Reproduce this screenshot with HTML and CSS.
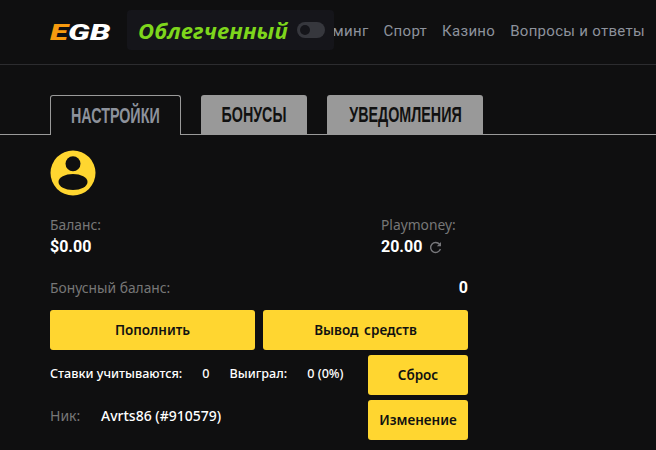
FILE: index.html
```html
<!DOCTYPE html>
<html lang="en">
<head>
    <meta charset="UTF-8">
    <title>EGB</title>
    <link rel="stylesheet" href="styles.css">
</head>
<body>

    <header class="header">
        <div class="logo"><span class="logo-e">E</span>GB</div>
        <nav class="nav">
            <a>Гейминг</a>
            <a>Спорт</a>
            <a>Казино</a>
            <a>Вопросы и ответы</a>
        </nav>
        <div class="lite-box">
            <span class="lite-label">Облегченный</span>
            <span class="toggle"><span class="toggle-knob"></span></span>
        </div>
    </header>

    <div class="tabs">
        <div class="tab tab-settings active"><span class="tab-text">НАСТРОЙКИ</span></div>
        <div class="tab tab-bonus"><span class="tab-text">БОНУСЫ</span></div>
        <div class="tab tab-notify"><span class="tab-text">УВЕДОМЛЕНИЯ</span></div>
    </div>

    <main class="content">
        <svg class="avatar" width="46" height="46" viewBox="0 0 46 46">
            <circle cx="23" cy="23" r="22.5" fill="#ffd630"/>
            <circle cx="23" cy="13.7" r="7.5" fill="#0f0f10"/>
            <ellipse cx="23" cy="32" rx="14.5" ry="8" fill="#0f0f10"/>
        </svg>

        <div class="balances">
            <div>
                <div class="label">Баланс:</div>
                <div class="amount">$0.00</div>
            </div>
            <div class="playmoney">
                <div class="label">Playmoney:</div>
                <div class="amount">20.00
                    <svg class="refresh" width="13" height="13" viewBox="0 0 13 13">
                        <path d="M10.6 3.4A5 5 0 1 0 11.4 8" fill="none" stroke="#77777b" stroke-width="1.4"/>
                        <path d="M12 1v4.2H7.8z" fill="#77777b"/>
                    </svg>
                </div>
            </div>
        </div>

        <div class="bonus-row">
            <span class="label">Бонусный баланс:</span>
            <span class="bonus-value">0</span>
        </div>

        <div class="main-buttons">
            <button class="btn">Пополнить</button>
            <button class="btn">Вывод средств</button>
        </div>

        <div class="stats">
            <div class="stats-text">
                <div class="stats-row">
                    <span class="stat-name">Ставки учитываются:</span>
                    <span class="stat-val">0</span>
                    <span class="stat-name">Выиграл:</span>
                    <span class="stat-val">0 (0%)</span>
                </div>
                <div class="nick-row">
                    <span class="nick-label">Ник:</span>
                    <span class="nick-value">Avrts86 (#910579)</span>
                </div>
            </div>
            <div class="side-buttons">
                <button class="btn">Сброс</button>
                <button class="btn">Изменение</button>
            </div>
        </div>
    </main>

</body>
</html>
```

FILE: styles.css
```css
body {
    font-family: 'Noto Sans', sans-serif;
    background-color: #0f0f10;
    margin: 0;
    padding: 0;
    height: 450px;
    overflow: hidden;
    color: #fff;
}

.header {
    display: flex;
    align-items: center;
    justify-content: space-between;
    height: 64px;
    padding: 0 11px 0 50px;
    border-bottom: 1px solid #2c2c2f;
    position: relative;
}

.logo {
    font-family: 'Roboto', sans-serif;
    font-size: 22px;
    font-weight: 900;
    font-style: italic;
    color: #fff;
    transform: scaleX(1.5);
    transform-origin: left center;
}

.logo-e {
    color: #f79a0e;
}

.nav {
    display: flex;
    gap: 15px;
    padding-bottom: 2px;
    font-family: 'Roboto', sans-serif;
    font-size: 15px;
    letter-spacing: 0.3px;
    color: #8d929c;
}

.lite-box {
    position: absolute;
    top: 10px;
    left: 127px;
    width: 207px;
    height: 40px;
    box-sizing: border-box;
    padding-left: 11px;
    display: flex;
    align-items: center;
    background-color: #15151a;
    border-radius: 4px;
}

.lite-label {
    font-family: 'Open Sans', sans-serif;
    font-size: 22px;
    font-weight: 700;
    font-style: italic;
    letter-spacing: 0.1px;
    color: #7ed61c;
}

.toggle {
    width: 28px;
    height: 16px;
    margin-left: 9px;
    padding: 3px;
    box-sizing: border-box;
    background-color: #36373d;
    border-radius: 8px;
}

.toggle-knob {
    display: block;
    width: 10px;
    height: 10px;
    background-color: #15151a;
    border-radius: 50%;
}

.tabs {
    display: flex;
    gap: 20px;
    height: 40px;
    box-sizing: border-box;
    margin-top: 30px;
    padding-left: 50px;
    border-bottom: 1px solid #9a9a9a;
}

.tab {
    display: flex;
    justify-content: center;
    align-items: center;
    height: 39px;
    background-color: #999;
    color: #111;
    border-radius: 3px 3px 0 0;
    box-sizing: border-box;
}

.tab-settings {
    width: 131px;
}

.tab-bonus {
    width: 106px;
}

.tab-notify {
    width: 156px;
}

.tab-text {
    font-family: 'Liberation Sans', sans-serif;
    font-size: 22px;
    font-weight: 700;
    white-space: nowrap;
    transform: scaleX(0.65);
}

.tab.active {
    height: 40px;
    background-color: #0f0f10;
    color: #8d929c;
    border: 1px solid #9a9a9a;
    border-bottom: none;
}

.content {
    width: 418px;
    margin-left: 50px;
    padding-top: 15px;
}

.avatar {
    display: block;
}

.balances {
    display: flex;
    justify-content: space-between;
    margin-top: 20px;
}

.playmoney {
    width: 87px;
}

.label {
    font-size: 13.8px;
    line-height: 18px;
    color: #777;
}

.amount {
    font-family: 'Roboto', sans-serif;
    font-size: 16px;
    font-weight: 700;
    line-height: 22px;
    margin-top: 2px;
    display: flex;
    align-items: center;
    gap: 7px;
}

.bonus-row {
    display: flex;
    justify-content: space-between;
    align-items: center;
    margin-top: 20px;
}

.bonus-value {
    font-family: 'Roboto', sans-serif;
    font-size: 16px;
    font-weight: 700;
}

.main-buttons {
    display: flex;
    gap: 8px;
    margin-top: 13px;
}

.main-buttons .btn {
    flex: 1;
}

.btn {
    font-family: 'Noto Sans', sans-serif;
    font-size: 13.5px;
    font-weight: 600;
    word-spacing: 2px;
    height: 40px;
    padding: 0;
    color: #111;
    background-color: #ffd630;
    border: none;
    border-radius: 3px;
}

.stats {
    display: flex;
    justify-content: space-between;
    margin-top: 5px;
}

.stats-row {
    display: flex;
    font-size: 12.6px;
    line-height: 16px;
    margin-top: 11px;
    font-weight: 500;
}

.stat-name {
    margin-right: 20px;
}

.stat-val {
    margin-right: 20px;
}

.nick-row {
    display: flex;
    font-size: 14px;
    line-height: 18px;
    margin-top: 25px;
}

.nick-label {
    width: 51px;
    color: #777;
}

.nick-value {
    font-weight: 500;
}

.side-buttons {
    display: flex;
    flex-direction: column;
    gap: 5px;
    width: 100px;
}
```
